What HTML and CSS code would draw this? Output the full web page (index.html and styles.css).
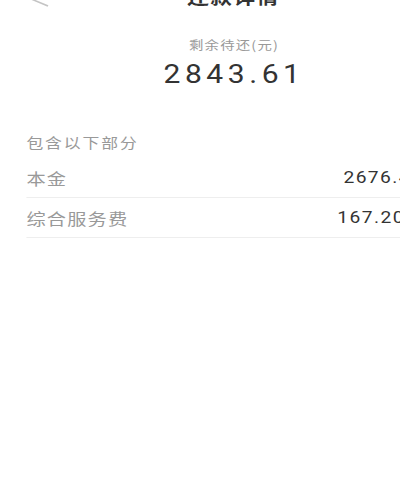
FILE: index.html
```html
<!DOCTYPE html>
<html lang="zh-CN">
<head>
	<meta charset="UTF-8">
	<title>还款详情</title>
	<link rel="stylesheet" href="styles.css">
</head>
<body>
	<div class="page">
		<div class="header">
			<svg class="back" width="17" height="20" viewBox="0 0 17 20"><path d="M15 4 L3 10 L15 16" fill="none" stroke="#c4c4c4" stroke-width="1.5"/></svg>
			<h1>还款详情</h1>
		</div>
		<div class="summary">
			<p class="summary-label">剩余待还(元)</p>
			<p class="summary-amount">2843.61</p>
		</div>
		<div class="parts">
			<p class="parts-title">包含以下部分</p>
			<ul>
				<li><span class="name">本金</span><span class="value">&nbsp;2676.41</span></li>
				<li><span class="name">综合服务费</span><span class="value">167.20</span></li>
			</ul>
		</div>
	</div>
</body>
</html>
```

FILE: styles.css
```css
html,body{margin:0;padding:0;background:#fff;overflow:hidden;}
body{font-family:"Noto Sans CJK SC","Noto Sans",sans-serif;}
p,h1,ul{margin:0;padding:0;}
ul{list-style:none;}

/* 原图整体横向拉伸 */
.page{width:388px;transform:scaleX(1.2);transform-origin:0 0;}

.header{position:relative;height:44px;margin-top:-26px;line-height:44px;text-align:center;}
.header h1{font-size:18px;font-weight:bold;color:#333;letter-spacing:1.2px;padding-left:1px;}
.back{position:absolute;left:25px;top:16px;}

.summary{margin-top:18px;text-align:center;}
.summary-label{font-size:12px;line-height:17px;color:#999;letter-spacing:1px;padding-left:2px;}
.summary-amount{margin-top:7px;font-family:Roboto,"Noto Sans",sans-serif;font-size:25px;line-height:30px;color:#333;letter-spacing:3.8px;padding-left:2px;}

.parts{margin-top:42px;padding-left:22px;}
.parts-title{font-size:14px;line-height:20px;color:#999;letter-spacing:1.6px;}
.parts ul{margin-top:6px;}
.parts li{display:grid;grid-template-columns:259px auto;align-items:center;height:39px;border-bottom:1px solid #eee;}
.parts .name{font-size:16px;color:#999;letter-spacing:1px;}
.parts .value{font-family:Roboto,"Noto Sans",sans-serif;font-size:16px;color:#333;letter-spacing:1.2px;white-space:nowrap;}
```
